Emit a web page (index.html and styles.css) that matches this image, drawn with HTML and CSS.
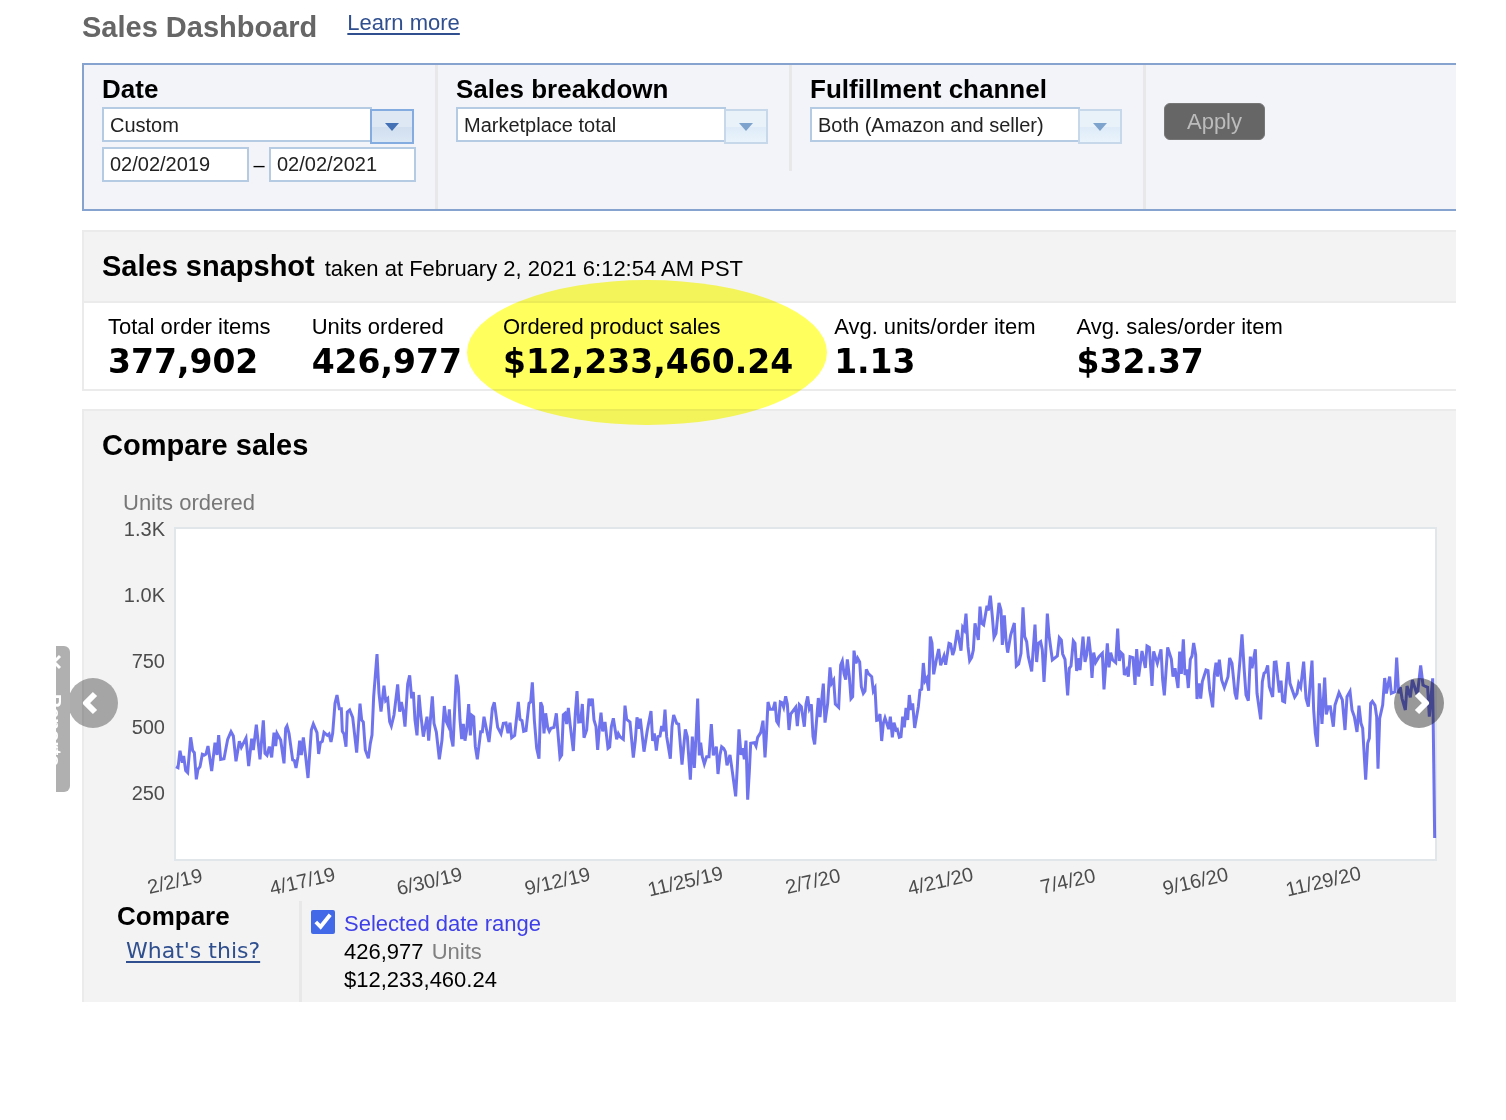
FILE: index.html
```html
<!DOCTYPE html>
<html lang="en">
<head>
    <meta charset="UTF-8">
    <meta name="viewport" content="width=device-width, initial-scale=1.0">
    <title>Sales Dashboard</title>
    <link rel="stylesheet" href="styles.css">
</head>
<body>
    <div class="page">
        <header class="page-header">
            <h1>Sales Dashboard</h1>
            <a href="#learn">Learn more</a>
        </header>

        <form class="filters">
            <div class="filter">
                <label for="date">Date</label>
                <div class="combo active">
                    <select id="date"><option>Custom</option></select>
                    <span class="trigger"></span>
                </div>
                <div class="range">
                    <input type="text" value="02/02/2019" aria-label="From">
                    <span>–</span>
                    <input type="text" value="02/02/2021" aria-label="To">
                </div>
            </div>
            <div class="filter short">
                <label for="breakdown">Sales breakdown</label>
                <div class="combo">
                    <select id="breakdown"><option>Marketplace total</option></select>
                    <span class="trigger"></span>
                </div>
            </div>
            <div class="filter">
                <label for="channel">Fulfillment channel</label>
                <div class="combo">
                    <select id="channel"><option>Both (Amazon and seller)</option></select>
                    <span class="trigger"></span>
                </div>
            </div>
            <div class="apply">
                <button type="button">Apply</button>
            </div>
        </form>

        <section class="panel snapshot">
            <div class="snapshot-header">
                <h2>Sales snapshot</h2>
                <span>taken at February 2, 2021 6:12:54 AM PST</span>
            </div>
            <dl class="stats">
                <div><dt>Total order items</dt><dd>377,902</dd></div>
                <div><dt>Units ordered</dt><dd>426,977</dd></div>
                <div class="highlight"><dt>Ordered product sales</dt><dd>$12,233,460.24</dd></div>
                <div><dt>Avg. units/order item</dt><dd>1.13</dd></div>
                <div><dt>Avg. sales/order item</dt><dd>$32.37</dd></div>
            </dl>
        </section>

        <section class="panel compare">
            <h2>Compare sales</h2>
            <p class="axis-title">Units ordered</p>
            <div class="chart">
                <div class="y-axis">
                    <span>1.3K</span>
                    <span>1.0K</span>
                    <span>750</span>
                    <span>500</span>
                    <span>250</span>
                </div>
                <div class="plot">
                    <svg viewBox="3 3 3777 990" preserveAspectRatio="none" role="img" aria-label="Units ordered per day">
                        <polyline points="3,716 9,719 15,668 22,704 26,684 32,728 38,734 47,628 53,668 58,674 64,754 69,724 75,716 82,679 88,681 93,678 99,654 110,729 120,644 126,681 131,621 137,694 147,692 158,634 168,611 175,624 183,700 193,640 199,658 213,630 221,714 230,632 235,666 244,590 255,694 265,577 270,676 276,682 283,656 290,688 297,614 302,654 306,616 317,636 327,706 332,601 336,594 342,616 353,696 358,698 363,720 369,686 374,638 379,681 385,628 392,686 399,750 409,606 415,588 426,614 431,678 436,644 442,640 447,613 457,622 462,618 468,642 473,616 480,526 486,501 493,542 499,542 502,610 507,618 513,656 517,552 524,546 533,568 545,674 555,527 560,576 565,582 571,666 580,691 586,646 591,621 596,506 606,378 612,496 618,551 627,473 632,518 638,512 644,581 649,594 657,561 668,469 674,551 679,522 685,551 690,596 698,468 704,442 710,511 715,492 720,576 726,622 732,501 737,556 745,626 756,566 761,638 772,505 777,586 784,612 793,694 801,636 808,534 814,581 819,592 823,544 828,626 834,655 839,546 844,440 850,476 855,576 860,633 865,588 870,638 875,606 881,528 886,622 891,562 896,566 901,656 907,694 917,611 922,611 927,566 942,642
                            948,586 952,541 958,523 968,598 978,617 985,586 993,585 999,616 1005,584 1010,629 1019,622 1024,576 1030,522 1035,574 1041,578 1046,610 1053,608 1062,526 1067,522 1072,463 1078,576 1085,661 1092,692 1097,523 1102,536 1107,616 1112,556 1118,598 1123,610 1128,601 1137,598 1144,556 1155,689 1160,681 1165,560 1170,556 1175,588 1180,540 1185,586 1195,669 1201,556 1206,489 1211,582 1217,581 1222,528 1227,629 1235,606 1242,512 1247,534 1252,512 1257,576 1263,596 1268,666 1273,601 1278,554 1283,610 1290,582 1299,661 1304,657 1309,596 1315,571 1325,634 1330,617 1335,626 1345,634 1350,533 1355,574 1365,582 1375,689 1381,636 1386,568 1392,602 1396,572 1407,671 1417,606 1428,549 1433,639 1438,616 1444,668 1449,626 1455,624 1460,594 1465,610 1470,545 1475,626 1486,692 1491,596 1496,561 1505,586 1511,588 1521,710 1531,604 1537,626 1546,755 1552,626 1558,720 1563,626 1568,512 1573,682 1577,644 1582,686 1588,708 1595,686 1602,686 1609,588 1615,682 1624,656 1629,738 1635,681 1640,656 1646,661 1651,671 1656,712 1665,681 1672,731 1682,805 1687,716 1692,604 1698,681 1703,661 1708,694 1713,638 1718,815 1723,731 1727,646
                            1738,644 1743,654 1748,628 1757,614 1764,578 1770,688 1774,626 1779,522 1785,544 1794,544 1800,522 1805,580 1810,588 1816,522 1821,524 1826,538 1832,505 1837,528 1842,606 1847,558 1862,538 1867,594 1873,530 1879,536 1888,596 1893,528 1898,505 1903,542 1909,529 1914,626 1919,649 1930,510 1935,567 1945,467 1950,584 1958,526 1965,418 1970,466 1976,456 1981,528 1991,538 1997,411 2002,399 2007,436 2012,455 2017,394 2023,446 2028,512 2033,506 2037,368 2043,406 2048,391 2054,402 2059,476 2065,496 2070,489 2074,424 2080,437 2090,446 2095,489 2100,480 2105,577 2110,576 2115,558 2120,639 2125,586 2130,570 2141,603 2146,566 2152,628 2157,584 2163,606 2167,604 2173,628 2178,626 2183,566 2188,598 2193,540 2198,576 2203,501 2208,546 2213,526 2219,600 2230,536 2235,486 2240,484 2245,405 2250,459 2255,451 2261,488 2266,326 2271,346 2276,439 2285,391 2291,363 2297,412 2307,384 2312,410 2322,346 2327,348 2333,381 2338,366 2347,306 2358,368 2363,298 2368,306 2373,257 2379,356 2384,398 2390,388 2395,366 2400,286 2410,336 2415,236 2420,286 2426,291 2436,233 2440,248 2446,203 2452,266 2457,328 2463,316 2472,225 2478,246 2482,351 2488,262 2493,336 2498,374 2507,321 2518,285 2524,414
                            2531,408 2538,376 2544,238 2549,326 2555,341 2560,386 2570,430 2580,290 2585,402 2590,346 2597,341 2602,366 2607,462 2612,376 2617,257 2622,321 2632,396 2647,384 2653,329 2659,336 2663,378 2670,394 2678,502 2683,421 2688,414 2695,339 2700,346 2705,429 2709,391 2715,426 2724,326 2730,402 2735,381 2741,326 2746,371 2751,450 2756,374 2762,403 2772,386 2782,376 2787,484 2797,346 2802,418 2807,374 2813,396 2822,404 2828,302 2833,399 2838,374 2844,380 2848,441 2855,426 2860,446 2865,386 2874,389 2880,471 2885,363 2891,446 2901,369 2911,420 2916,354 2923,358 2931,474 2936,370 2947,406 2958,364 2963,456 2968,502 2978,358 2989,393 2994,446 3000,421 3009,480 3014,371 3019,438 3025,334 3030,441 3035,424 3040,480 3046,394 3051,384 3056,345 3062,381 3066,513 3072,466 3077,512 3082,461 3093,426 3099,428 3104,486 3113,538 3118,441 3123,404 3128,446 3133,395 3140,456 3148,479 3159,446 3164,390 3171,406 3180,496 3185,514 3195,396 3201,319 3207,416 3213,501 3220,518 3226,386 3231,421 3241,364 3246,496 3257,574
                            3262,461 3267,436 3272,432 3278,412 3283,476 3293,507 3298,403 3303,402 3313,494 3318,458 3323,519 3329,522 3339,402 3345,466 3359,507 3366,496 3371,466 3377,478 3386,401 3393,511 3400,536 3411,398 3416,546 3421,616 3427,656 3433,466 3441,588 3449,449 3454,559 3460,536 3466,536 3475,596 3480,531 3492,494 3502,516 3510,606 3516,506 3525,490 3531,546 3538,566 3546,612 3552,533 3558,586 3563,601 3572,755 3578,646 3583,631 3587,526 3592,520 3600,532 3605,566 3609,722 3614,571 3623,531 3629,450 3634,496 3644,446 3649,496 3660,491 3665,389 3671,496 3676,478 3681,511 3691,546 3696,474 3706,508 3712,456 3727,502 3737,412 3744,471 3749,474 3758,478 3763,566 3773,451 3779,930" />
                    </svg>
                </div>
                <div class="x-axis">
                    <span>2/2/19</span>
                    <span>4/17/19</span>
                    <span>6/30/19</span>
                    <span>9/12/19</span>
                    <span>11/25/19</span>
                    <span>2/7/20</span>
                    <span>4/21/20</span>
                    <span>7/4/20</span>
                    <span>9/16/20</span>
                    <span>11/29/20</span>
                </div>
            </div>

            <div class="legend">
                <div class="legend-title">
                    <h3>Compare</h3>
                    <a href="#compare-help">What's this?</a>
                </div>
                <div class="series">
                    <input type="checkbox" id="selected-range" checked>
                    <div>
                        <label for="selected-range">Selected date range</label>
                        <p>426,977 <span>Units</span></p>
                        <p>$12,233,460.24</p>
                    </div>
                </div>
            </div>

            <button type="button" class="arrow prev" aria-label="Previous">
                <svg viewBox="0 0 50 50"><path d="M27 16 L18 25 L27 34" /></svg>
            </button>
            <button type="button" class="arrow next" aria-label="Next">
                <svg viewBox="0 0 50 50"><path d="M23 16 L32 25 L23 34" /></svg>
            </button>
        </section>

        <button type="button" class="side-tab">
            <svg viewBox="0 0 16 16"><path d="M14 2 L8 8 L14 14" /></svg>
            Reports
        </button>
    </div>
</body>
</html>
```
FILE: styles.css
```css
* {
    box-sizing: border-box;
}
body {
    margin: 0;
    background-color: #ffffff;
    color: #000;
    font-family: "Liberation Sans", Arial, sans-serif;
    font-size: 22px;
    line-height: 28px;
}
h1, h2, h3, p, dl, dd {
    margin: 0;
}
input, select, button {
    font-family: inherit;
}
a {
    color: #2f4f8f;
    text-underline-offset: 3px;
}
.page {
    position: relative;
    margin: 0 50px 0 56px;
    padding: 10px 0 0 26px;
    overflow: hidden;
}
.page-header {
    display: flex;
    gap: 30px;
    margin-bottom: 19px;
}
.page-header a {
    line-height: 26px;
}
h1, h2 {
    font-size: 29px;
    line-height: 34px;
}
h1 {
    color: #666;
}

/* filters */
.filters {
    display: flex;
    margin-bottom: 19px;
    border: 2px solid #86a3d0;
    border-right: none;
    background-color: #f3f4fa;
}
.filter {
    width: 354px;
    min-height: 106px;
    padding: 8px 0 27px 18px;
    border-right: 3px solid #e8e8e8;
}
.filter.short {
    align-self: flex-start;
    padding-bottom: 0;
}
.filter label {
    display: block;
    margin-bottom: 2px;
    font-size: 26px;
    font-weight: bold;
    line-height: 32px;
}
.combo {
    display: flex;
}
.combo select, .range input {
    height: 35px;
    padding: 0 6px;
    border: 2px solid #b4cbe3;
    border-radius: 0;
    background-color: #ffffff;
    color: #222;
    font-size: 20px;
}
.combo select {
    width: 270px;
    appearance: none;
}
.trigger {
    display: flex;
    justify-content: center;
    align-items: center;
    width: 44px;
    height: 35px;
    margin: 2px 0 0 -2px;
    border: 2px solid #c6d8ea;
    background: linear-gradient(#e9f1f9 50%, #deebf8 50%, #e9f3fb);
}
.trigger::before {
    content: "";
    border: 7px solid transparent;
    border-top: 8px solid #7ea3cd;
    border-bottom: none;
}
.active .trigger {
    border-color: #84ace0;
    background: linear-gradient(#dde8f4 50%, #d0deef 50%, #dbe7f4);
}
.active .trigger::before {
    border-top-color: #4470b5;
}
.range {
    display: flex;
    align-items: center;
    margin-top: 3px;
}
.range input {
    width: 147px;
}
.range span {
    width: 20px;
    font-size: 20px;
    text-align: center;
}
.apply {
    padding: 38px 0 0 18px;
}
.apply button {
    width: 101px;
    height: 37px;
    padding: 0;
    border: 1px solid #777;
    border-radius: 6px;
    background-color: #666;
    color: #bcbcbc;
    font-size: 22px;
}

/* panels */
.panel {
    position: relative;
    border: 2px solid #ebebeb;
    border-right: none;
}
.snapshot {
    margin-bottom: 18px;
}
.snapshot-header {
    display: flex;
    align-items: baseline;
    gap: 10px;
    padding: 17px 18px 18px;
    border-bottom: 2px solid #ebebeb;
    background-color: #f3f3f3;
}
.stats {
    display: flex;
    gap: 41px;
    padding: 10px 24px 6px;
}
.stats dd {
    font-family: "DejaVu Sans", Verdana, sans-serif;
    font-size: 33px;
    font-weight: bold;
    line-height: 42px;
}
.highlight {
    position: relative;
}
.highlight::after {
    content: "";
    position: absolute;
    z-index: 1;
    top: -33px;
    left: -36px;
    width: 360px;
    height: 145px;
    border-radius: 50%;
    background-color: #ffff5e;
    mix-blend-mode: multiply;
}

/* chart */
.compare {
    border-bottom: none;
    background-color: #f3f3f3;
}
.compare h2 {
    padding: 17px 18px 27px;
}
.axis-title {
    padding-left: 39px;
    color: #777;
}
.chart {
    display: grid;
    grid-template-columns: 90px 1fr;
    margin-top: 2px;
    padding-right: 19px;
    color: #4c4c4c;
    font-size: 20px;
    line-height: 20px;
}
.y-axis {
    display: flex;
    flex-direction: column;
    gap: 46px;
    padding-right: 9px;
    text-align: right;
}
.plot {
    height: 334px;
    margin-top: 8px;
    border: 2px solid #e0e6ea;
    background-color: #ffffff;
}
.plot svg {
    display: block;
    width: 100%;
    height: 100%;
    overflow: visible;
}
.plot polyline {
    fill: none;
    stroke: #4046e6;
    stroke-width: 3px;
    stroke-opacity: 0.75;
    vector-effect: non-scaling-stroke;
}
.x-axis {
    grid-column: 2;
    display: grid;
    grid-template-columns: repeat(10, 1fr);
    margin: 0 4% 0 -5%;
    padding: 10px 0;
    justify-items: center;
}
.x-axis span {
    transform: rotate(-13deg);
}

/* legend */
.legend {
    display: flex;
}
.legend-title {
    width: 218px;
    padding-left: 33px;
    border-right: 3px solid #e8e8e8;
}
.legend-title h3 {
    font-size: 26px;
    line-height: 30px;
}
.legend-title a {
    display: block;
    padding: 6px 0 0 9px;
    font-family: "DejaVu Sans", Verdana, sans-serif;
}
.series {
    display: flex;
    gap: 9px;
    padding: 9px 0 8px 9px;
}
.series input {
    width: 24px;
    height: 24px;
    margin: 0;
    accent-color: #4169e8;
}
.series label {
    color: #4040e8;
}
.series span {
    margin-left: 2px;
    color: #808080;
}

.arrow {
    position: absolute;
    top: 267px;
    width: 50px;
    height: 50px;
    padding: 0;
    border: none;
    border-radius: 50%;
    background-color: rgba(0, 0, 0, 0.4);
}
.arrow svg {
    display: block;
}
.arrow path {
    fill: none;
    stroke: #ffffff;
    stroke-width: 6;
    stroke-linejoin: round;
}
.prev {
    left: -16px;
    background-color: rgba(0, 0, 0, 0.32);
}
.next {
    right: 12px;
}
.side-tab {
    position: absolute;
    top: 646px;
    left: -18px;
    display: flex;
    align-items: center;
    gap: 24px;
    width: 32px;
    height: 146px;
    padding: 8px 0;
    border: none;
    border-radius: 6px;
    background-color: #b0b0b0;
    color: #ffffff;
    font-size: 19px;
    font-weight: bold;
    writing-mode: vertical-rl;
}
.side-tab svg {
    width: 16px;
    height: 16px;
}
.side-tab path {
    fill: none;
    stroke: #ffffff;
    stroke-width: 3;
}
```
